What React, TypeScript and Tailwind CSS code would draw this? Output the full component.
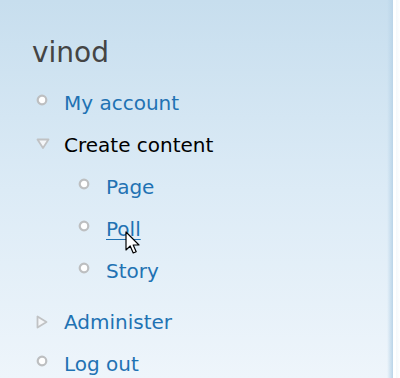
import React from 'react'

const font = { fontFamily: '"DejaVu Sans", Verdana, sans-serif' }

function Leaf() {
  return (
    <svg width="12" height="12" viewBox="0 0 12 12" className="shrink-0 -translate-y-[3px]">
      <circle cx="6" cy="6" r="4.3" fill="#ffffff" stroke="#bdbfc1" strokeWidth="2.2" />
    </svg>
  )
}

function Expanded() {
  return (
    <svg width="14" height="12" viewBox="0 0 14 12" className="shrink-0 -translate-y-[1px]">
      <path d="M1.5 1.5 L12.5 1.5 L7 10 Z" fill="#f4f6f8" stroke="#c0c2c4" strokeWidth="1.8" strokeLinejoin="round" />
    </svg>
  )
}

function Collapsed() {
  return (
    <svg width="12" height="14" viewBox="0 0 12 14" className="shrink-0">
      <path d="M1.5 1.5 L1.5 12.5 L10.5 7 Z" fill="#f4f6f8" stroke="#c0c2c4" strokeWidth="1.8" strokeLinejoin="round" />
    </svg>
  )
}

function Cursor() {
  return (
    <svg width="16" height="25" viewBox="0 0 16 25" className="absolute left-[125px] top-[231px]">
      <path
        d="M1 1 L1 19 L5.2 15 L8.2 22 L11.2 20.8 L8.2 14 L14 14 Z"
        fill="#ffffff"
        stroke="#000000"
        strokeWidth="1.2"
        strokeLinejoin="round"
      />
    </svg>
  )
}

type Item = { label: string; icon: 'leaf' | 'expanded' | 'collapsed'; active?: boolean; hover?: boolean }

function Row({ item, indent }: { item: Item; indent?: boolean }) {
  return (
    <li className={`flex h-[42px] items-center ${indent ? 'pl-[78px]' : 'pl-[36px]'}`}>
      <span className="flex w-[28px] items-center">
        {item.icon === 'leaf' && <Leaf />}
        {item.icon === 'expanded' && <Expanded />}
        {item.icon === 'collapsed' && <Collapsed />}
      </span>
      <span
        className={`text-[20px] leading-[42px] ${item.active ? 'text-black' : 'text-[#1f72b3]'} ${item.hover ? 'underline underline-offset-[3px] decoration-1' : ''}`}
      >
        {item.label}
      </span>
    </li>
  )
}

export default function App() {
  const children: Item[] = [
    { label: 'Page', icon: 'leaf' },
    { label: 'Poll', icon: 'leaf', hover: true },
    { label: 'Story', icon: 'leaf' },
  ]

  return (
    <div className="flex h-[378px] w-[400px] overflow-hidden bg-white" style={font}>
      <div className="relative h-full w-[393px] bg-gradient-to-b from-[#c7deee] via-[#dcebf6] to-[#eef5fb]">
        <div className="absolute right-0 top-0 h-full w-[6px] bg-gradient-to-r from-transparent to-[#b9d4e8]" />
        <h2 className="pl-[32px] pt-[39px] text-[28px] leading-[28px] text-[#444444]">vinod</h2>
        <ul className="mt-[15px]">
          <Row item={{ label: 'My account', icon: 'leaf' }} />
          <Row item={{ label: 'Create content', icon: 'expanded', active: true }} />
          <li>
            <ul>
              {children.map((c) => (
                <Row key={c.label} item={c} indent />
              ))}
            </ul>
          </li>
          <li className="h-[9px]" />
          <Row item={{ label: 'Administer', icon: 'collapsed' }} />
          <Row item={{ label: 'Log out', icon: 'leaf' }} />
        </ul>
        <Cursor />
      </div>
      <div className="h-full w-[7px] border-l-[3px] border-white bg-gradient-to-r from-[#f4f8fb] to-white" />
    </div>
  )
}
